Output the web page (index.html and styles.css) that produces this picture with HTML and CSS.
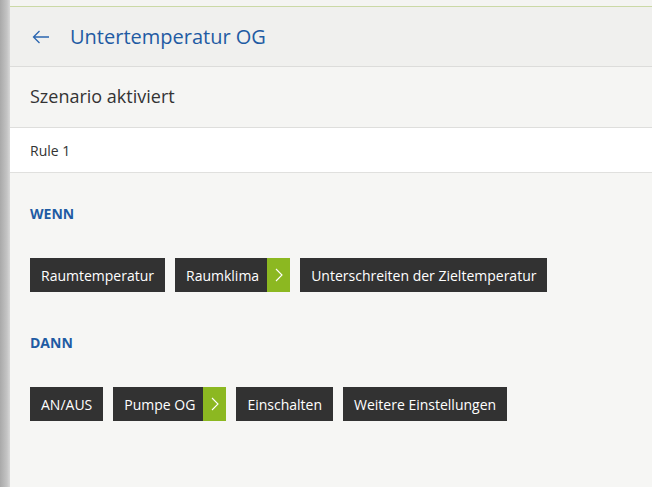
FILE: index.html
```html
<!DOCTYPE html>
<html lang="de">
<head>
<meta charset="utf-8">
<title>Untertemperatur OG</title>
<link rel="stylesheet" href="styles.css">
</head>
<body>
<div class="app">
  <div class="edge"></div>
  <main class="panel">
    <div class="topline"></div>
    <header class="header">
      <svg class="back" width="18" height="14" viewBox="0 0 18 14" aria-hidden="true">
        <path d="M17 7H1.5M7.5 1L1.5 7l6 6" fill="none" stroke="#2a66b0" stroke-width="1.3"/>
      </svg>
      <h1 class="title">Untertemperatur OG</h1>
    </header>
    <div class="status">Szenario aktiviert</div>
    <div class="rule">Rule 1</div>
    <section class="block">
      <h2 class="label">WENN</h2>
      <div class="chips">
        <span class="chip">Raumtemperatur</span>
        <span class="chip chip-next">Raumklima<span class="arrow"><svg width="8" height="14" viewBox="0 0 8 14"><path d="M1 1l6 6-6 6" fill="none" stroke="#fff" stroke-width="1.1"/></svg></span></span>
        <span class="chip">Unterschreiten der Zieltemperatur</span>
      </div>
      <h2 class="label">DANN</h2>
      <div class="chips">
        <span class="chip">AN/AUS</span>
        <span class="chip chip-next">Pumpe OG<span class="arrow"><svg width="8" height="14" viewBox="0 0 8 14"><path d="M1 1l6 6-6 6" fill="none" stroke="#fff" stroke-width="1.1"/></svg></span></span>
        <span class="chip">Einschalten</span>
        <span class="chip">Weitere Einstellungen</span>
      </div>
    </section>
  </main>
</div>
</body>
</html>
```
FILE: styles.css
```css
* { box-sizing: border-box; }
html, body { margin: 0; padding: 0; }
body {
  font-family: "Open Sans", "Noto Sans", sans-serif;
  background: #f6f6f4;
  color: #333;
}
.app {
  display: flex;
  min-height: 487px;
}
.edge {
  width: 10px;
  flex: none;
  background: linear-gradient(to right, #a9a9a9, #c4c4c4 70%, #d8d8d8);
}
.panel {
  flex: 1;
  display: flex;
  flex-direction: column;
  background: #f6f6f4;
}
.topline {
  height: 7px;
  background: #f4f4f2;
  border-bottom: 1px solid #cbd9a6;
}
.header {
  height: 60px;
  background: #f0f0ee;
  border-bottom: 1px solid #dcdcda;
  display: flex;
  align-items: center;
  padding-left: 22px;
}
.back { margin-right: 20px; margin-top: 1px; }
.title {
  margin: 0;
  font-size: 20px;
  font-weight: 400;
  color: #1f5ba3;
}
.status {
  height: 61px;
  display: flex;
  align-items: center;
  padding: 0 0 3px 20px;
  font-size: 18px;
  color: #333;
  background: #f5f5f3;
  border-bottom: 1px solid #dededc;
}
.rule {
  height: 45px;
  display: flex;
  align-items: center;
  padding-left: 20px;
  font-size: 14px;
  color: #333;
  background: #fff;
  border-bottom: 1px solid #e0e0de;
}
.block {
  padding: 31px 20px 0;
}
.label {
  margin: 0;
  font-size: 14px;
  font-weight: 700;
  color: #1f5ba3;
  line-height: 20px;
}
.chips {
  display: flex;
  gap: 10px;
  margin: 34px 0 41px;
}
.chip {
  height: 34px;
  display: inline-flex;
  align-items: center;
  padding: 0 11px;
  background: #323232;
  color: #fff;
  font-size: 14px;
}
.chip-next { padding-right: 0; }
.arrow {
  width: 23px;
  height: 34px;
  margin-left: 8px;
  background: #8cb821;
  display: flex;
  align-items: center;
  justify-content: center;
}
```
